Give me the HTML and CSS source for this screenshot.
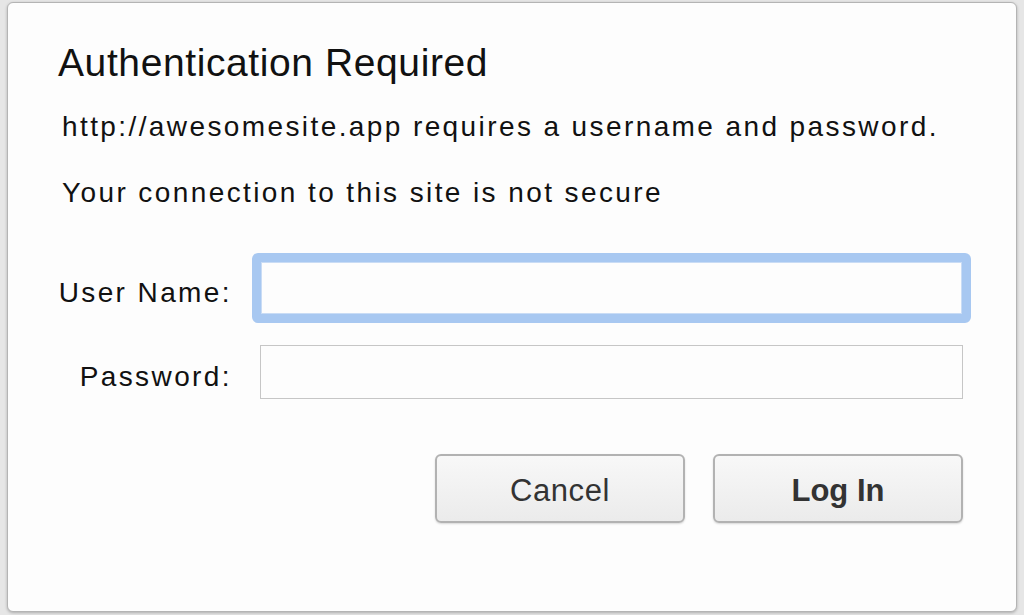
FILE: index.html
```html
<!DOCTYPE html>
<html lang="en">
<head>
<meta charset="utf-8">
<title>Authentication Required</title>
<link rel="stylesheet" href="styles.css">
</head>
<body>
<div class="dialog">
  <h1 class="title">Authentication Required</h1>
  <p class="msg msg-first">http://awesomesite.app requires a username and password.</p>
  <p class="msg msg-second">Your connection to this site is not secure</p>
  <div class="form">
    <div class="row row-user">
      <label class="label" for="user">User Name:</label>
      <input class="field field-focus" id="user" type="text">
    </div>
    <div class="row row-pass">
      <label class="label" for="pass">Password:</label>
      <input class="field" id="pass" type="password">
    </div>
  </div>
  <div class="buttons">
    <button class="btn">Cancel</button>
    <button class="btn btn-default">Log In</button>
  </div>
</div>
</body>
</html>
```
FILE: styles.css
```css
* { box-sizing: border-box; }
html, body { margin: 0; padding: 0; }
body {
  width: 1024px;
  height: 615px;
  background: #e6e6e6;
  font-family: "Liberation Sans", Arial, sans-serif;
  color: #111;
  overflow: hidden;
  padding: 2px 7px 0 7px;
}
.dialog {
  width: 1010px;
  height: 610px;
  background: #fdfdfd;
  border: 1px solid #b4b4b4;
  border-radius: 6px;
  box-shadow: 0 1px 3px rgba(0,0,0,0.25);
  display: flex;
  flex-direction: column;
}
.title {
  margin: 36px 0 0 50px;
  font-size: 39px;
  font-weight: normal;
  line-height: 48px;
  letter-spacing: 0.6px;
  color: #111;
}
.msg {
  margin: 0 0 0 54px;
  font-size: 28px;
  line-height: 34px;
  letter-spacing: 2.4px;
  color: #111;
}
.msg-first { margin-top: 23px; }
.msg-second { margin-top: 32px; }
.form {
  margin-top: 43px;
  display: flex;
  flex-direction: column;
  gap: 22px;
}
.row {
  display: flex;
  align-items: center;
}
.label {
  width: 224px;
  text-align: right;
  font-size: 28px;
  letter-spacing: 2.4px;
  color: #111;
  padding-top: 10px;
}
.field {
  margin-left: 28px;
  width: 703px;
  height: 54px;
  border: 1px solid #c6c6c6;
  background: #fdfdfd;
  outline: none;
  font-size: 24px;
}
.field-focus {
  margin-left: 20px;
  width: 719px;
  height: 70px;
  border: 9px solid #a8c8f1;
  border-radius: 6px;
  box-shadow: inset 0 0 0 1px #c9dcf5;
}
.buttons {
  margin-top: 55px;
  display: flex;
  gap: 28px;
  padding-left: 427px;
}
.btn {
  width: 250px;
  height: 69px;
  border: 2px solid #b2b2b2;
  border-radius: 6px;
  background: linear-gradient(#f8f8f8, #ebebeb);
  box-shadow: 0 1px 2px rgba(0,0,0,0.15);
  font-family: "Liberation Sans", Arial, sans-serif;
  font-size: 31px;
  letter-spacing: 0.6px;
  color: #333;
  padding: 4px 0 0 0;
}
.btn-default {
  font-weight: bold;
  letter-spacing: 0;
}
```
